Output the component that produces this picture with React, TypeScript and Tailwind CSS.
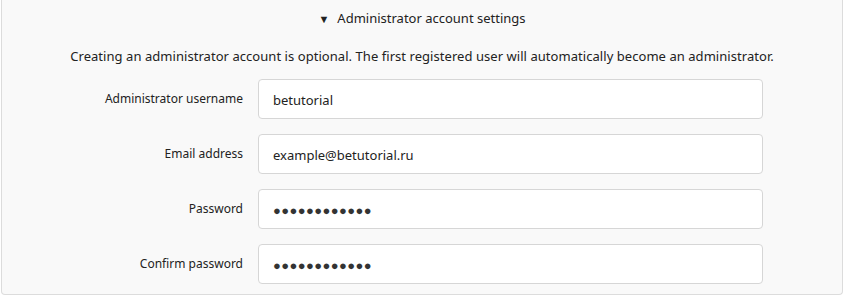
const fields = [
  { label: "Administrator username", value: "betutorial", type: "text" },
  { label: "Email address", value: "example@betutorial.ru", type: "text" },
  { label: "Password", value: "●●●●●●●●●●●●", type: "password" },
  { label: "Confirm password", value: "●●●●●●●●●●●●", type: "password" },
];

export default function App() {
  return (
    <div className="w-[844px] h-[296px] bg-white font-['Noto_Sans',sans-serif] text-[13px] text-[#222]">
      <div className="ml-[1px] mr-[1px] h-[295px] border border-t-0 border-[#dcdcdc] rounded-b-[4px] bg-[#f9f9f9]">
        <div className="flex justify-center items-center gap-[8px] pt-[9px] h-[29px]">
          <span className="text-[11px]">▼</span>
          <span>Administrator account settings</span>
        </div>
        <p className="text-center mt-[17px] leading-[20px] tracking-[0.05px]">
          Creating an administrator account is optional. The first registered user will automatically become an administrator.
        </p>
        <div className="mt-[13px] flex flex-col gap-[15px]">
          {fields.map((f) => (
            <div key={f.label} className="flex items-start">
              <label className="w-[241px] text-right text-[12px] pt-[10px] leading-[20px]">{f.label}</label>
              <div className="ml-[15px] w-[505px] h-[40px] bg-white border border-[#d6d6d6] rounded-[4px] px-[14px] pt-[3px] flex items-center">
                {f.type === "password" ? (
                  <span className="text-[13px] tracking-[0.4px] text-[#333]">{f.value}</span>
                ) : (
                  <span>{f.value}</span>
                )}
              </div>
            </div>
          ))}
        </div>
      </div>
    </div>
  );
}
